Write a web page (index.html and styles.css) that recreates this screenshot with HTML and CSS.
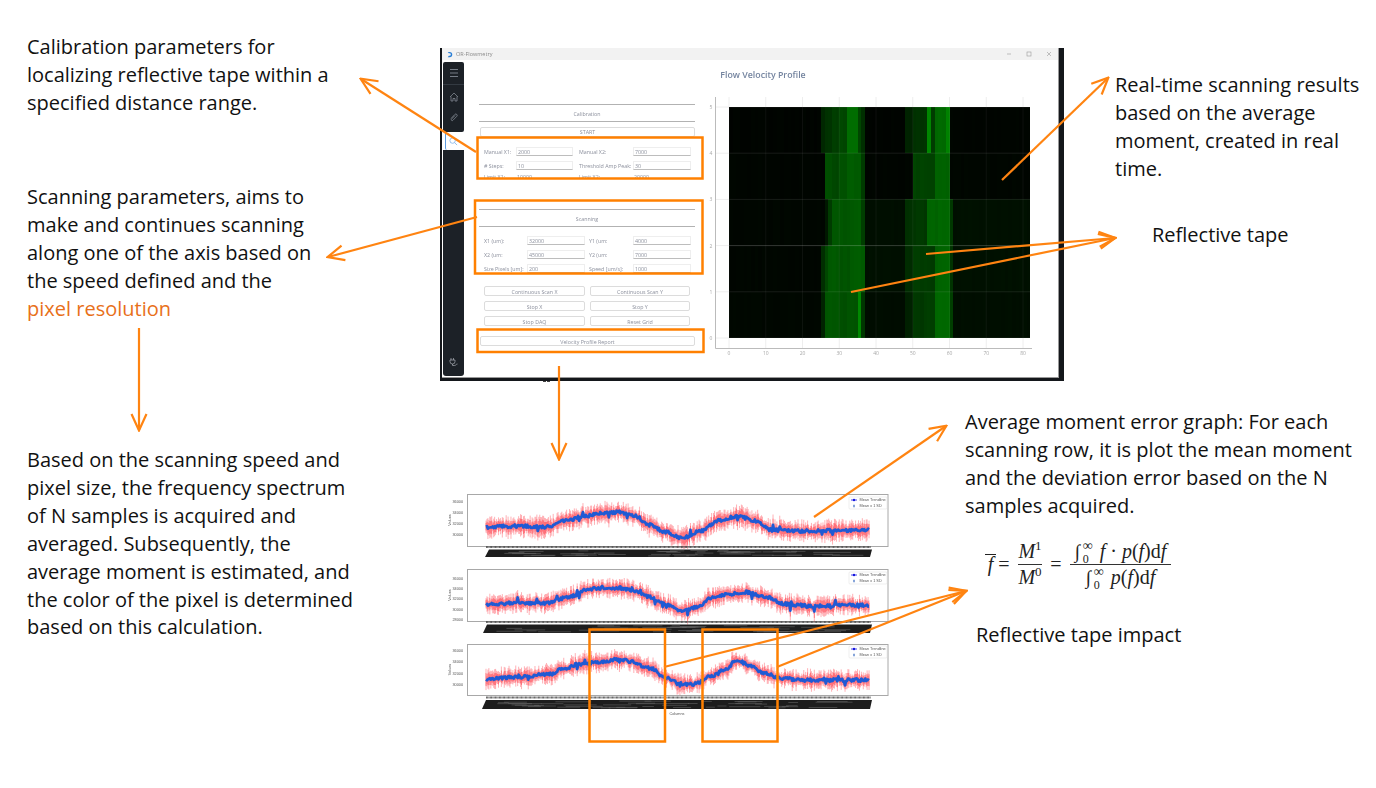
FILE: index.html
```html
<!DOCTYPE html>
<html lang="en">
<head>
<meta charset="utf-8">
<title>Flow velocity annotated figure</title>
<link rel="stylesheet" href="styles.css">
</head>
<body>
<main class="canvas">
  <p class="note note-calibration">Calibration parameters for<br>localizing reflective tape within a<br>specified distance range.</p>
  <p class="note note-scanning">Scanning parameters, aims to<br>make and continues scanning<br>along one of the axis based on<br>the speed defined and the<br><span class="accent">pixel resolution</span></p>
  <p class="note note-spectrum">Based on the scanning speed and<br>pixel size, the frequency spectrum<br>of N samples is acquired and<br>averaged. Subsequently, the<br>average moment is estimated, and<br>the color of the pixel is determined<br>based on this calculation.</p>
  <p class="note note-realtime">Real-time scanning results<br>based on the average<br>moment, created in real<br>time.</p>
  <p class="note note-tape">Reflective tape</p>
  <p class="note note-error">Average moment error graph: For each<br>scanning row, it is plot the mean moment<br>and the deviation error based on the N<br>samples acquired.</p>
  <p class="note note-impact">Reflective tape impact</p>

  <div class="equation">
    <span class="eq-bar">f</span><span class="eq-op">=</span>
    <span class="frac frac-small"><span class="frac-top"><i>M</i><sup>1</sup></span><span class="frac-bottom"><i>M</i><sup>0</sup></span></span>
    <span class="eq-op">=</span>
    <span class="frac frac-wide">
      <span class="frac-top"><span class="int">∫<sub>0</sub><sup>∞</sup></span><i>f</i> · <i>p</i>(<i>f</i>)d<i>f</i></span>
      <span class="frac-bottom"><span class="int">∫<sub>0</sub><sup>∞</sup></span><i>p</i>(<i>f</i>)d<i>f</i></span>
    </span>
  </div>

  <section class="window">
    <div class="window-inner">
      <header class="titlebar">
        <svg class="logo" viewBox="0 0 8 8"><path d="M1 .5h2.500a3.500 3.500 0 0 1 0 7H1l1.400-1.800h1a1.700 1.700 0 0 0 0-3.400h-1z" fill="#2b7fd6"/></svg>
        <span class="app-name">OR-Flowmetry</span>
        <span class="win-controls">
          <svg viewBox="0 0 6 6"><path d="M1 3h4" stroke="#999" stroke-width=".6"/></svg>
          <svg viewBox="0 0 6 6"><rect x="1" y="1" width="4" height="4" fill="none" stroke="#999" stroke-width=".6"/></svg>
          <svg viewBox="0 0 6 6"><path d="M1 1l4 4M5 1l-4 4" stroke="#999" stroke-width=".6"/></svg>
        </span>
      </header>
      <div class="app-body">
        <nav class="sidebar">
          <div class="side-top">
            <svg class="side-icon menu-icon" viewBox="0 0 10 10"><path d="M1 1.500h8M1 5h8M1 8.500h8" stroke="#8d949e" stroke-width=".8"/></svg>
            <div class="side-divider"></div>
            <svg class="side-icon" viewBox="0 0 10 10"><path d="M1 5l4-4 4 4M2 4.500V9h2V6.500h2V9h2V4.500" fill="none" stroke="#8d949e" stroke-width=".7"/></svg>
            <svg class="side-icon" viewBox="0 0 10 10"><path d="M2 6.500l3.800-4a1.300 1.300 0 0 1 2 1.800L3.900 8.300a.9.9 0 0 1-1.400-1.200L6 3.500" fill="none" stroke="#8d949e" stroke-width=".7"/></svg>
          </div>
          <div class="side-tab">
            <svg class="tab-icon" viewBox="0 0 10 10"><circle cx="4" cy="4" r="3" fill="none" stroke="#7fb2ea" stroke-width=".9"/><path d="M6.200 6.200L9 9" stroke="#7fb2ea" stroke-width=".9"/></svg>
          </div>
          <div class="side-bottom">
            <svg class="side-icon" viewBox="0 0 10 10"><path d="M2 1v2M4.500 1v2M1 3h5v1.500a2.500 2.500 0 0 1-5 0zM3.500 7v1.500h2c1.500 0 1.500-1.500 3-1.500" fill="none" stroke="#a9aeb5" stroke-width=".7"/></svg>
          </div>
        </nav>
        <div class="main-area">
          <h1 class="app-title">Flow Velocity Profile</h1>
          <div class="work-row">
            <form class="form-panel">
              <div class="section-head">Calibration</div>
              <button type="button" class="btn btn-wide btn-start">START</button>
              <div class="fields fields-calibration">
                <label>Manual X1:</label><span class="input">2000</span><label>Manual X2:</label><span class="input">7000</span>
                <label># Steps:</label><span class="input">10</span><label>Threshold Amp Peak:</label><span class="input">30</span>
                <label>Limit X1:</label><span class="value">10000</span><label>Limit X2:</label><span class="value">20000</span>
              </div>
              <div class="section-head section-scan">Scanning</div>
              <div class="fields fields-scanning">
                <label>X1 (um):</label><span class="input">32000</span><label>Y1 (um:</label><span class="input">4000</span>
                <label>X2 (um:</label><span class="input">45000</span><label>Y2 (um:</label><span class="input">7000</span>
                <label>Size Pixels [um]:</label><span class="input">200</span><label>Speed [um/s]:</label><span class="input">1000</span>
              </div>
              <div class="button-grid">
                <button type="button" class="btn">Continuous Scan X</button><button type="button" class="btn">Continuous Scan Y</button>
                <button type="button" class="btn">Stop X</button><button type="button" class="btn">Stop Y</button>
                <button type="button" class="btn">Stop DAQ</button><button type="button" class="btn">Reset Grid</button>
              </div>
              <button type="button" class="btn btn-wide btn-report">Velocity Profile Report</button>
            </form>
            <svg id="heatmap" class="heatmap" viewBox="700 97 340 263"></svg>
          </div>
        </div>
      </div>
    </div>
  </section>

  <svg id="charts" class="charts" viewBox="440 488 460 232"></svg>

  <svg class="overlay" viewBox="0 0 1376 788">
    <defs>
      <marker id="head" viewBox="0 0 20 20" refX="18" refY="10" markerWidth="20" markerHeight="20" markerUnits="userSpaceOnUse" orient="auto">
        <path class="head-path" d="M2 2.500L18.500 10L2 17.500"/>
      </marker>
    </defs>
    <path class="behind-mark" d="M543 381.500h3M547 381.500h3"/>
    <g class="boxes">
      <rect x="477.500" y="137.500" width="225" height="41"/>
      <rect x="475" y="200.500" width="227.500" height="73"/>
      <rect x="477.500" y="329.500" width="226" height="22.500"/>
      <rect x="589.500" y="629.500" width="75.500" height="112"/>
      <rect x="702.500" y="629.500" width="75" height="112"/>
    </g>
    <g class="arrows">
      <path d="M476 152L361 79" marker-end="url(#head)"/>
      <path d="M477 217L328 257" marker-end="url(#head)"/>
      <path d="M139 328V430" marker-end="url(#head)"/>
      <path d="M559 366V459" marker-end="url(#head)"/>
      <path d="M1002 180L1108 78" marker-end="url(#head)"/>
      <path d="M926 254L1115 238" marker-end="url(#head)"/>
      <path d="M851 292L1115 238" marker-end="url(#head)"/>
      <path d="M814 517L946 426" marker-end="url(#head)"/>
      <path d="M664 667L966 591" marker-end="url(#head)"/>
      <path d="M777 667L966 591" marker-end="url(#head)"/>
    </g>
  </svg>
</main>
<script src="script.js"></script>
</body>
</html>
```
FILE: styles.css
```css
* { box-sizing: border-box; }
html, body { margin: 0; padding: 0; background: #fff; }
.canvas { position: relative; width: 1376px; height: 788px; overflow: hidden; background: #fff; font-family: "Open Sans", "Noto Sans", sans-serif; }

.note { position: absolute; margin: 0; font-size: 20px; line-height: 27.900px; color: #111; white-space: nowrap; }
.note-calibration { left: 27px; top: 33px; }
.note-scanning { left: 27px; top: 183px; }
.note-spectrum { left: 27px; top: 446px; }
.note-realtime { left: 1115px; top: 71px; }
.note-tape { left: 1152px; top: 221px; }
.note-error { left: 965px; top: 408px; }
.note-impact { left: 976px; top: 621px; }
.accent { color: #e8701a; }

.equation { position: absolute; left: 985px; top: 535px; height: 58px; display: flex; align-items: center; font-family: "Liberation Serif", serif; font-size: 20px; color: #222; }
.eq-bar { font-style: italic; border-top: 1px solid #222; line-height: 18px; width: 11px; text-align: center; margin: -2px 2px 0 0; }
.eq-op { width: 12px; text-align: center; margin-right: 8px; }
.frac { display: flex; flex-direction: column; align-items: center; margin-right: 8px; }
.frac-top { padding: 0 0 1px; border-bottom: 1px solid #333; width: 100%; text-align: center; white-space: nowrap; line-height: 23px; }
.frac-bottom { padding: 1px 0 0; white-space: nowrap; line-height: 23px; }
.frac-small { width: 24px; }
.frac-wide { width: 101px; }
.frac sup { font-size: 13px; line-height: 0; }
.int { display: inline-block; position: relative; width: 25px; text-align: left; font-size: 19px; }
.int sub, .int sup { position: absolute; font-size: 12px; line-height: 1; left: 8px; }
.int sub { bottom: -2px; }
.int sup { top: -1px; font-size: 14px; }

.window { position: absolute; left: 440px; top: 48px; width: 624px; height: 333px; background: #14171b; padding: 0 5px 3px 2px; }
.window-inner { height: 100%; background: #fff; display: flex; flex-direction: column; border-right: 1px solid #999; border-bottom: 1px solid #999; filter: blur(.3px); }
.titlebar { height: 12px; flex: none; background: #f2f2f2; display: flex; align-items: center; padding-left: 5px; gap: 3px; color: #8a8a8a; font-size: 5.500px; }
.logo { width: 6px; height: 7px; }
.win-controls { margin-left: auto; display: flex; gap: 14px; padding-right: 6px; }
.win-controls svg { width: 6px; height: 6px; }

.app-body { flex: 1; display: flex; min-height: 0; }
.sidebar { width: 22px; margin-left: 1px; padding-top: 2px; display: flex; flex-direction: column; flex: none; }
.side-top { width: 21px; height: 70px; background: #1c2127; border-radius: 2px; display: flex; flex-direction: column; align-items: center; padding-top: 2px; }
.side-icon { width: 10px; height: 10px; margin-top: 10px; }
.menu-icon { margin-top: 4px; }
.side-divider { width: 100%; height: 1px; background: #333a42; margin-top: 6px; margin-bottom: -3px; }
.side-tab { height: 18px; margin-left: 2px; width: 20px; background: #fff; border-left: 1px solid #5b9be0; border-radius: 2px 0 0 2px; display: flex; align-items: center; justify-content: center; }
.tab-icon { width: 9px; height: 9px; margin-right: 4px; }
.side-bottom { flex: 1; width: 21px; background: #1c2127; border-radius: 0 0 3px 3px; margin-bottom: 1px; display: flex; flex-direction: column; justify-content: flex-end; align-items: center; padding-bottom: 9px; }

.main-area { flex: 1; min-width: 0; display: flex; flex-direction: column; }
.app-title { margin: 0; height: 37px; padding: 8px 0 0 3px; text-align: center; font-size: 8.800px; line-height: 14px; font-weight: 600; color: #74849f; }
.work-row { display: flex; flex: 1; min-height: 0; }
.form-panel { width: 235px; flex: none; padding: 7px 5px 0 14px; color: #8b8f9c; font-size: 5.300px; }
.section-head { height: 18px; border-top: 1px solid #b2b2b2; border-bottom: 1px solid #b2b2b2; text-align: center; line-height: 18px; }
.section-scan { margin-top: 30px; }
.btn { display: block; height: 10px; padding: 1px 0 0; margin: 0; background: #fff; border: 1px solid #dcdcdc; border-radius: 2px; font: inherit; color: #8b8f9c; line-height: 8px; }
.btn-wide { width: 215px; margin-left: 1px; }
.btn-start { margin-top: 5px; padding-top: 0; }
.fields { display: grid; margin-left: 5px; width: 207px; grid-auto-rows: 9px; row-gap: 5px; align-items: center; white-space: nowrap; }
.fields-calibration { grid-template-columns: 26px 57px 48px 58px; grid-template-rows: 9px 9px 3px; column-gap: 6px; margin-top: 10px; height: 32px; }
.fields-scanning { grid-template-columns: 39px 58px 40px 58px; column-gap: 4px; margin-top: 9px; height: 37px; }
.input { display: block; height: 9px; line-height: 8px; padding-left: 1px; background: #fff; border: 1px solid #eee; border-bottom: 1px solid #bdbdbd; }
.value { padding-left: 1px; }
.button-grid { display: grid; grid-template-columns: 101px 100px; gap: 5px; margin: 13px 0 0 5px; }
.btn-report { margin-top: 10px; }

.heatmap { width: 340px; height: 263px; flex: none; }
.charts { position: absolute; left: 440px; top: 488px; width: 460px; height: 232px; filter: blur(.4px); }
.overlay { position: absolute; left: 0; top: 0; width: 1376px; height: 788px; pointer-events: none; }
.behind-mark { stroke: #444; stroke-width: 1; fill: none; }
.boxes rect { fill: none; stroke: #ff8000; stroke-width: 2.500; }
.arrows path { fill: none; stroke: #ff8411; stroke-width: 2.200; }
.head-path { fill: none; stroke: #ff8411; stroke-width: 2.200; }
.tick-text { font-family: "Open Sans", sans-serif; font-size: 5px; fill: #a8a8a8; }
.chart-text { font-family: "Liberation Sans", sans-serif; font-size: 3.800px; fill: #555; }
```
FILE: script.js
```js
(function () {
  var NS = 'http://www.w3.org/2000/svg';
  function el(parent, name, attrs, text) {
    var n = document.createElementNS(NS, name);
    for (var k in attrs) n.setAttribute(k, attrs[k]);
    if (text !== undefined) n.textContent = text;
    parent.appendChild(n);
    return n;
  }
  var seed = 12345;
  function rnd() { seed = (seed * 16807) % 2147483647; return seed / 2147483647; }

  /* heat map */
  var hm = document.getElementById('heatmap');
  var X0 = 729, UX = 3.675, Y0 = 338, UY = 46.2, X_END = 1030;
  var rows = [
    [[0,4],[25,36],[26,50],[28,62],[30,70],[32,106],[35,72],[36,44],[37,4],[48,34],[50,50],[54,135],[55,60],[56,106],[59,128],[60,5]],
    [[0,5],[26,76],[28,68],[30,82],[32,90],[36,60],[37,5],[50,66],[56,96],[60,6]],
    [[0,6],[26,24],[27,62],[28,84],[33,90],[36,62],[37,14],[48,48],[50,56],[54,100],[60,58],[61,16]],
    [[0,6],[25,46],[26,70],[27,88],[30,82],[33,92],[37,16],[48,42],[50,60],[56,98],[60,52],[61,16]],
    [[0,7],[25,34],[26,86],[30,80],[33,84],[35,136],[36,58],[37,12],[48,34],[50,54],[53,62],[56,104],[60,64],[61,14]]
  ];
  rows.forEach(function (row, r) {
    var top = 107 + r * UY, idx = 0;
    for (var c = 0; c < 82; c++) {
      while (idx + 1 < row.length && row[idx + 1][0] <= c) idx++;
      var v = row[idx][1];
      var g = Math.max(0, Math.round(v + (rnd() - 0.5) * (v > 30 ? 6 : 2)));
      var x = X0 + c * UX;
      if (x >= X_END) break;
      el(hm, 'rect', { x: x.toFixed(2), y: top.toFixed(1), width: Math.min(UX + .4, X_END - x).toFixed(2), height: (UY + .4).toFixed(1), fill: 'rgb(0,' + g + ',0)', 'shape-rendering': 'crispEdges' });
    }
  });
  for (var i = 0; i <= 8; i++) {
    var gx = X0 + i * 10 * UX;
    el(hm, 'path', { d: 'M' + gx + ' 97V107', stroke: '#eee', 'stroke-width': 1 });
    el(hm, 'path', { d: 'M' + gx + ' 107V338', stroke: 'rgba(255,255,255,.05)', 'stroke-width': 1 });
    el(hm, 'path', { d: 'M' + gx + ' 338V348', stroke: '#eee', 'stroke-width': 1 });
    el(hm, 'text', { x: gx, y: 355, 'text-anchor': 'middle', 'class': 'tick-text' }, String(i * 10));
  }
  for (var j = 0; j <= 5; j++) {
    var gy = Y0 - j * UY;
    el(hm, 'path', { d: 'M715 ' + gy + 'H729', stroke: '#eee', 'stroke-width': 1 });
    el(hm, 'path', { d: 'M729 ' + gy + 'H1030', stroke: 'rgba(255,255,255,' + (j === 2 ? .2 : .09) + ')', 'stroke-width': 1 });
    el(hm, 'text', { x: 711, y: gy + 2, 'text-anchor': 'middle', 'class': 'tick-text' }, String(j));
  }
  el(hm, 'path', { d: 'M715.500 97V348.500H1032', fill: 'none', stroke: '#bbb', 'stroke-width': 1 });

  /* error charts */
  var svg = document.getElementById('charts');
  var charts = [
    { top: 494, bottom: 546, lx: 849, ly: 497, ticks: [['36000',502],['34000',513],['32000',524],['30000',535]],
      band: [549.5, 557, 485], sd: 8.5, legend: 'Mean ± 1 SD',
      curve: [[486,527],[520,526],[545,527],[565,521],[585,516],[600,513],[620,512],[635,516],[650,525],[665,532],[683,538],[700,531],[720,520],[738,516],[755,521],[772,530],[800,531],[870,530]] },
    { top: 569, bottom: 621, lx: 849, ly: 572, ticks: [['36000',579],['34000',589],['32000',599],['30000',610],['28000',620]],
      band: [624.5, 633, 483], sd: 8, legend: 'Mean ± 1 SD',
      curve: [[486,604],[520,603],[545,603],[570,597],[585,590],[600,588],[620,588],[635,591],[650,597],[665,604],[682,611],[697,607],[712,598],[730,594],[745,592],[765,597],[785,604],[810,606],[870,605]] },
    { top: 644, bottom: 695, lx: 849, ly: 646, ticks: [['36000',651],['34000',662],['32000',674],['30000',685]],
      band: [700, 709, 482], sd: 8, legend: 'Mean ± 1 SD',
      curve: [[486,679],[520,677],[550,674],[565,668],[580,664],[600,662],[620,659],[632,662],[650,668],[665,677],[680,684],[695,684],[712,676],[725,670],[737,660],[750,666],[765,673],[780,678],[800,680],[870,680]] }
  ];
  function at(curve, x) {
    for (var i = 0; i < curve.length - 1; i++) {
      var a = curve[i], b = curve[i + 1];
      if (x <= b[0]) { var t = (x - a[0]) / (b[0] - a[0]); t = t * t * (3 - 2 * t); return a[1] + (b[1] - a[1]) * t; }
    }
    return curve[curve.length - 1][1];
  }
  charts.forEach(function (c) {
    el(svg, 'rect', { x: 467.5, y: c.top + .5, width: 420.5, height: c.bottom - c.top, fill: '#fff', stroke: '#a8a8a8', 'stroke-width': 1 });
    var pts = [];
    for (var x = 486; x <= 870; x += 0.96) {
      var m = at(c.curve, x) + (rnd() - .5) * 3.2;
      if (rnd() < .05) m += (rnd() - .5) * 10;
      var s = c.sd * (.5 + rnd() * .85);
      el(svg, 'path', { d: 'M' + x.toFixed(2) + ' ' + (m - s).toFixed(1) + 'V' + (m + s).toFixed(1), stroke: '#ff3340', 'stroke-opacity': .38, 'stroke-width': 1 });
      el(svg, 'path', { d: 'M' + x.toFixed(2) + ' ' + (m - s * .6).toFixed(1) + 'V' + (m + s * .6).toFixed(1), stroke: '#ff3340', 'stroke-opacity': .5, 'stroke-width': 1 });
      pts.push(x.toFixed(2) + ' ' + m.toFixed(1));
    }
    el(svg, 'path', { d: 'M' + pts.join('L'), fill: 'none', stroke: '#1f5ad4', 'stroke-width': 2.800, 'stroke-linejoin': 'round' });
    /* rotated tick labels, as a dense slanted band */
    var b = c.band;
    el(svg, 'path', { d: 'M486 ' + (b[0] - 2.5) + 'H871', stroke: '#444', 'stroke-width': 1.800, 'stroke-dasharray': '.8 .5' });
    el(svg, 'path', { d: 'M' + (b[2] + 4) + ' ' + b[0] + 'H872L870 ' + b[1] + 'H' + b[2] + 'Z', fill: '#1d1d1d' });
    for (var k = 0; k < 45; k++) {
      var lx = b[2] + 8 + rnd() * 340, ly = b[0] + 1 + rnd() * (b[1] - b[0] - 2);
      el(svg, 'path', { d: 'M' + lx.toFixed(1) + ' ' + ly.toFixed(1) + 'h' + (8 + rnd() * 30).toFixed(1), stroke: '#6e6e6e', 'stroke-width': .5 });
    }
    c.ticks.forEach(function (t) {
      el(svg, 'text', { x: 463, y: t[1] + 1.3, 'text-anchor': 'end', 'class': 'chart-text' }, t[0]);
    });
    var cy = (c.top + c.bottom) / 2;
    el(svg, 'text', { x: 451, y: cy, 'text-anchor': 'middle', 'class': 'chart-text', transform: 'rotate(-90 451 ' + cy + ')' }, 'Values');
    el(svg, 'rect', { x: 849, y: c.ly, width: 38, height: 12, fill: '#fff', stroke: '#ddd', 'stroke-width': .5, rx: 1 });
    el(svg, 'path', { d: 'M851 ' + (c.ly + 3) + 'h6', stroke: '#1414e0', 'stroke-width': .8 });
    el(svg, 'circle', { cx: 854, cy: c.ly + 3, r: 1.200, fill: '#1414e0' });
    el(svg, 'path', { d: 'M854 ' + (c.ly + 7.500) + 'v3', stroke: '#6a8fd0', 'stroke-width': .8 });
    el(svg, 'circle', { cx: 854, cy: c.ly + 9, r: .9, fill: '#6a8fd0' });
    el(svg, 'text', { x: 859.500, y: c.ly + 4.300, 'class': 'chart-text' }, 'Mean Trendline');
    el(svg, 'text', { x: 859.500, y: c.ly + 10.300, 'class': 'chart-text' }, c.legend);
  });
  el(svg, 'text', { x: 677, y: 715, 'text-anchor': 'middle', 'class': 'chart-text' }, 'Columns');
})();
```
